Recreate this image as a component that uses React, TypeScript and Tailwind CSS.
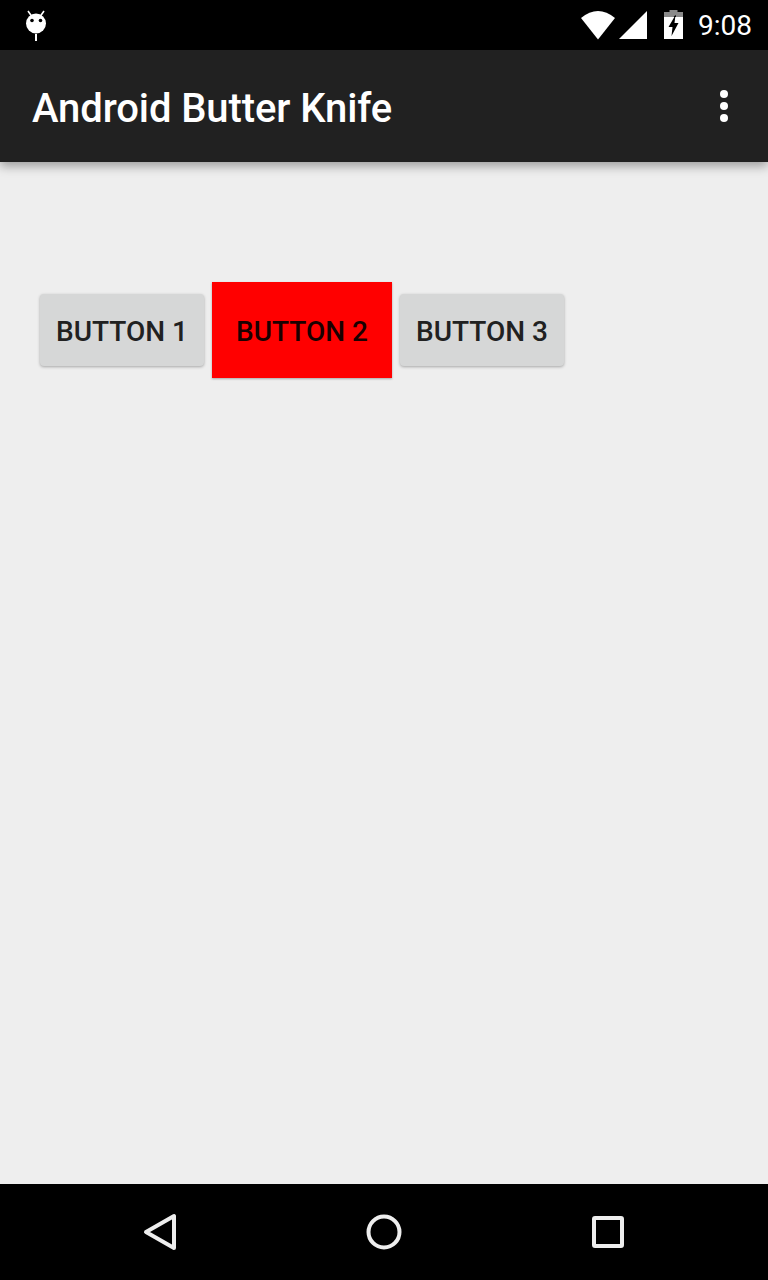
const BUTTONS = ["BUTTON 1", "BUTTON 2", "BUTTON 3"];

function StatusBar() {
  return (
    <div className="flex h-[50px] shrink-0 items-center justify-between bg-black pl-[24px] pr-[16px]">
      {/* notification icon */}
      <svg width="24" height="34" viewBox="0 0 24 34" className="mt-[-1px]">
        <circle cx="12" cy="15.5" r="10" fill="#fff" />
        <path d="M4 3l3.5 5M20 3l-3.5 5" stroke="#fff" strokeWidth="1.6" />
        <circle cx="8" cy="12.5" r="1.8" fill="#000" />
        <circle cx="16.5" cy="12.5" r="1.8" fill="#000" />
        <rect x="11" y="26" width="2" height="7" fill="#fff" />
      </svg>
      <div className="flex items-center">
        <svg width="36" height="30" viewBox="0 0 36 30">
          <path d="M1 8Q18 -6 35 8L18 29.5Z" fill="#fff" />
        </svg>
        <svg width="28" height="28" viewBox="0 0 28 28" className="ml-[3px]">
          <path d="M0 28L28 0V28Z" fill="#fff" />
        </svg>
        <svg width="20" height="30" viewBox="0 0 20 30" className="ml-[17px]">
          <path d="M5.5 0H13.5V2H19V7H0V2H5.500Z" fill="#8a8a8a" />
          <path d="M0 7H19V29H0Z" fill="#fff" />
          <path d="M11.500 5L4.500 17H8.500L7.500 26L14.500 13H10.500Z" fill="#000" />
          <path d="M11.500 5L12 7H9.500Z" fill="#000" />
        </svg>
        <span className="ml-[14px] mt-[2px] font-['Roboto',sans-serif] text-[28px] leading-none text-white">9:08</span>
      </div>
    </div>
  );
}

function Toolbar() {
  return (
    <div className="relative z-10 flex h-[112px] shrink-0 items-center justify-between bg-[#212121] pl-[32px] pr-[40px] shadow-[0_4px_10px_rgba(0,0,0,0.35)]">
      <h1 className="mt-[6px] font-['Roboto',sans-serif] text-[40px] font-medium leading-none tracking-[-0.1px] text-white">Android Butter Knife</h1>
      <div className="flex flex-col gap-[4px]">
        <span className="h-[8px] w-[8px] rounded-full bg-white" />
        <span className="h-[8px] w-[8px] rounded-full bg-white" />
        <span className="h-[8px] w-[8px] rounded-full bg-white" />
      </div>
    </div>
  );
}

function NavBar() {
  return (
    <div className="flex h-[96px] shrink-0 items-center bg-black pl-[143px]">
      <svg width="36" height="40" viewBox="0 0 36 40">
        <path d="M31 4V36L3 20Z" fill="none" stroke="#eeeeee" strokeWidth="4" strokeLinejoin="round" />
      </svg>
      <svg width="38" height="38" viewBox="0 0 38 38" className="ml-[186px]">
        <circle cx="19" cy="19" r="15.500" fill="none" stroke="#eeeeee" strokeWidth="4" />
      </svg>
      <div className="ml-[189px] h-[32px] w-[32px] rounded-[3px] border-[4px] border-[#eeeeee]" />
    </div>
  );
}

export default function App() {
  return (
    <div className="flex h-[1280px] w-[768px] flex-col overflow-hidden bg-[#eeeeee]">
      <StatusBar />
      <Toolbar />
      <div className="flex flex-1 items-start gap-[8px] pl-[40px] pt-[120px]">
        {BUTTONS.map((label, idx) =>
          idx === 1 ? (
            <button
              key={label}
              className="h-[96px] w-[180px] bg-[#ff0000] pt-[4px] font-['Roboto',sans-serif] text-[28px] font-medium text-[#1a0000] shadow-[0_1px_2px_rgba(0,0,0,0.3)]"
            >
              {label}
            </button>
          ) : (
            <button
              key={label}
              className="mt-[12px] h-[72px] w-[164px] rounded-[4px] bg-[#d6d7d7] pt-[4px] font-['Roboto',sans-serif] text-[28px] font-medium text-[#212121] shadow-[0_1px_3px_rgba(0,0,0,0.3)]"
            >
              {label}
            </button>
          ),
        )}
      </div>
      <NavBar />
    </div>
  );
}
